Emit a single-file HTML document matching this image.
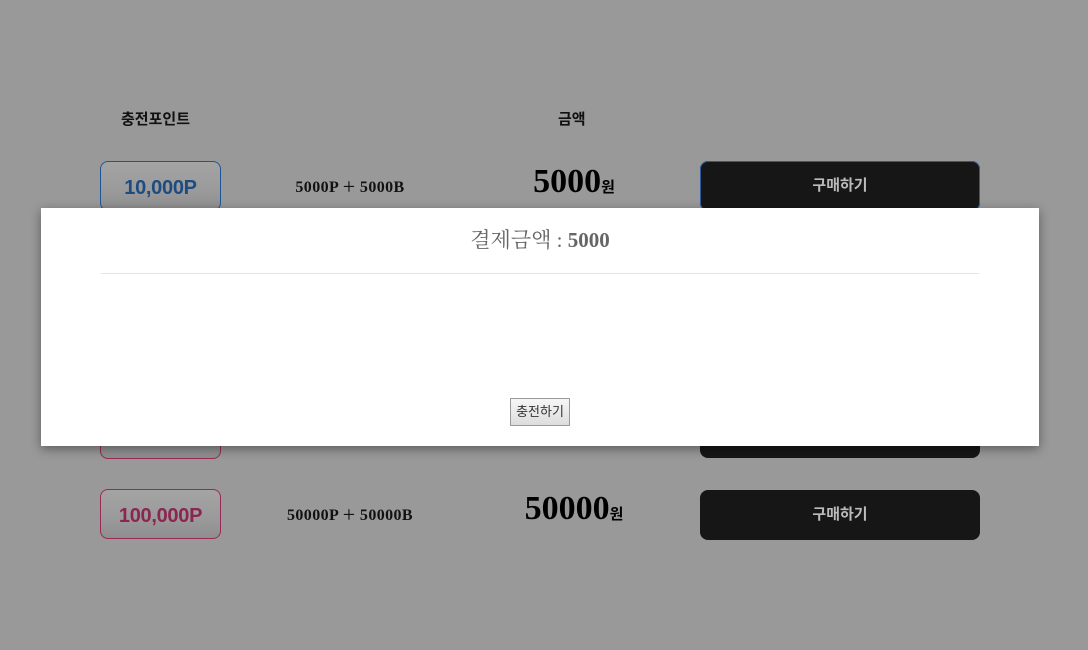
<!DOCTYPE html>
<html><head><meta charset="utf-8"><style>
body{margin:0;width:1088px;height:650px;background:#999;position:relative;overflow:hidden;font-family:"Liberation Sans","Noto Sans CJK KR",sans-serif}
.a{position:absolute}
.h{font-size:15px;font-weight:bold;color:#111;top:108px}
.pt{left:100px;width:119px;height:48px;border:1px solid;border-radius:8px;background:linear-gradient(#a4a4a4,#9a9a9a 60%,#8e8e8e);font-size:20px;font-weight:bold;text-align:center;line-height:52px;letter-spacing:-0.3px}
.bl{border-color:#1f5596;color:#1f4c80}
.pk{border-color:#9a2a55;color:#8a2650}
.mid{font-family:"Liberation Serif","Noto Serif CJK SC",serif;font-weight:bold;font-size:16px;color:#111;width:240px;text-align:center;left:230px;letter-spacing:0.4px}
.mid i{font-style:normal;font-size:22px;font-weight:normal;vertical-align:-2px}
.amt{font-family:"Liberation Serif","Noto Serif CJK SC",serif;font-weight:bold;font-size:34px;color:#000;width:200px;text-align:center;left:474px}
.amt span{font-family:"Noto Sans CJK KR",sans-serif;font-size:15px}
.btn{left:700px;width:280px;height:50px;border-radius:8px;background:#161616;color:#bbb;font-size:15px;font-weight:bold;text-align:center;line-height:50px}
</style></head><body>
<div class="a h" style="left:121px">충전포인트</div>
<div class="a h" style="left:558px">금액</div>

<div class="a pt bl" style="top:161px">10,000P</div>
<div class="a mid" style="top:174px">5000P <i>+</i> 5000B</div>
<div class="a amt" style="top:163px">5000<span>원</span></div>
<div class="a btn" style="top:161px;box-shadow:0 0 0 1px #2f5a9a inset">구매하기</div>

<div class="a pt pk" style="top:409px"></div>
<div class="a btn" style="top:408px"></div>

<div class="a pt pk" style="top:489px">100,000P</div>
<div class="a mid" style="top:502px">50000P <i>+</i> 50000B</div>
<div class="a amt" style="top:490px">50000<span>원</span></div>
<div class="a btn" style="top:490px">구매하기</div>

<div class="a" style="left:41px;top:208px;width:998px;height:238px;background:#fff;box-shadow:0 3px 10px rgba(0,0,0,0.4)">
<div class="a" style="left:0;width:998px;top:16px;text-align:center;font-family:'Liberation Serif','Noto Serif CJK KR',serif;font-size:21px;color:#666">결제금액 : <b>5000</b></div>
<div class="a" style="left:60px;top:65px;width:878px;height:1px;background:#e5e5e5"></div>
<div class="a" style="left:469px;top:190px;width:58px;height:26px;border:1px solid #999;background:linear-gradient(#f6f6f6,#ddd);font-size:13px;color:#333;text-align:center;line-height:24px;font-family:'Noto Sans CJK KR',sans-serif">충전하기</div>
</div>
</body></html>
